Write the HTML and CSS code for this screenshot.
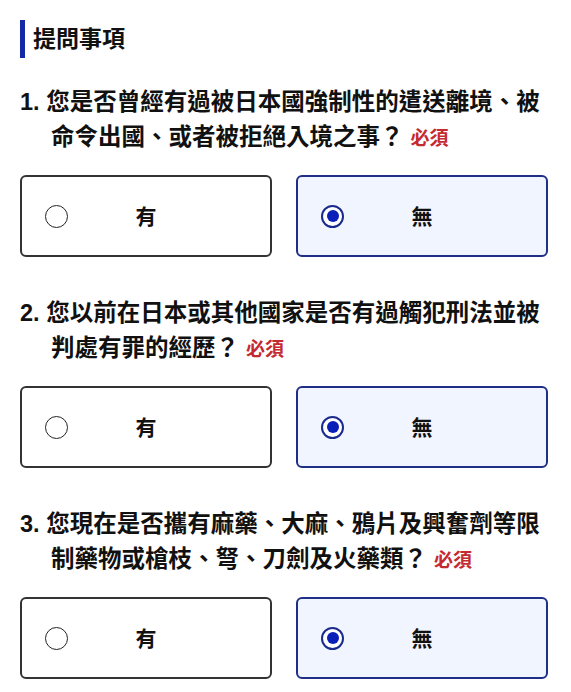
FILE: index.html
```html
<!DOCTYPE html>
<html lang="zh-Hant">
<head>
<meta charset="utf-8">
<title>提問事項</title>
<link rel="stylesheet" href="styles.css">
</head>
<body>
<main class="page">
  <h2 class="section-title">提問事項</h2>

  <section class="question">
    <p class="q-text">1. 您是否曾經有過被日本國強制性的遣送離境、被命令出國、或者被拒絕入境之事？<span class="req">必須</span></p>
    <div class="options">
      <label class="option"><span class="radio"></span><span class="opt-label">有</span></label>
      <label class="option selected"><span class="radio"></span><span class="opt-label">無</span></label>
    </div>
  </section>

  <section class="question">
    <p class="q-text">2. 您以前在日本或其他國家是否有過觸犯刑法並被判處有罪的經歷？<span class="req">必須</span></p>
    <div class="options">
      <label class="option"><span class="radio"></span><span class="opt-label">有</span></label>
      <label class="option selected"><span class="radio"></span><span class="opt-label">無</span></label>
    </div>
  </section>

  <section class="question">
    <p class="q-text">3. 您現在是否攜有麻藥、大麻、鴉片及興奮劑等限制藥物或槍枝、弩、刀劍及火藥類？<span class="req">必須</span></p>
    <div class="options">
      <label class="option"><span class="radio"></span><span class="opt-label">有</span></label>
      <label class="option selected"><span class="radio"></span><span class="opt-label">無</span></label>
    </div>
  </section>
</main>
</body>
</html>
```

FILE: styles.css
```css
html, body {
  margin: 0;
  padding: 0;
  background: #ffffff;
}

body {
  font-family: "Liberation Sans", "Noto Sans CJK TC", sans-serif;
  color: #111111;
}

.page {
  width: 528px;
  padding: 20px 0 0 20px;
}

.section-title {
  margin: 0;
  height: 38px;
  border-left: 5px solid #1428a8;
  padding-left: 8px;
  font-size: 23px;
  font-weight: 700;
  line-height: 38px;
  color: #111111;
}

.question {
  padding-top: 27px;
  padding-bottom: 12px;
}

.q-text {
  margin: 0;
  font-size: 23.5px;
  font-weight: 700;
  line-height: 34.5px;
  padding-left: 31px;
  text-indent: -31px;
  color: #111111;
}

.req {
  display: inline-block;
  text-indent: 0;
  font-size: 19px;
  font-weight: 700;
  line-height: 1;
  color: #c42a30;
  margin-left: 7px;
}

.options {
  display: grid;
  grid-template-columns: 1fr 1fr;
  column-gap: 24px;
  margin-top: 21px;
}

.option {
  box-sizing: border-box;
  height: 82px;
  border: 2px solid #333333;
  border-radius: 6px;
  background: #ffffff;
  display: grid;
  grid-template-columns: 1fr auto 1fr;
  align-items: center;
}

.option.selected {
  border-color: #1f2f86;
  background: #f1f5ff;
}

.radio {
  justify-self: start;
  margin-left: 23px;
  box-sizing: border-box;
  width: 23px;
  height: 23px;
  border-radius: 50%;
  border: 1.5px solid #222222;
  background: #ffffff;
  display: flex;
  align-items: center;
  justify-content: center;
}

.selected .radio {
  border: 2.5px solid #1a2a8c;
}

.selected .radio::after {
  content: "";
  width: 12px;
  height: 12px;
  border-radius: 50%;
  background: #0a1fb8;
}

.opt-label {
  font-size: 21px;
  font-weight: 700;
  line-height: 1;
  color: #111111;
}
```
